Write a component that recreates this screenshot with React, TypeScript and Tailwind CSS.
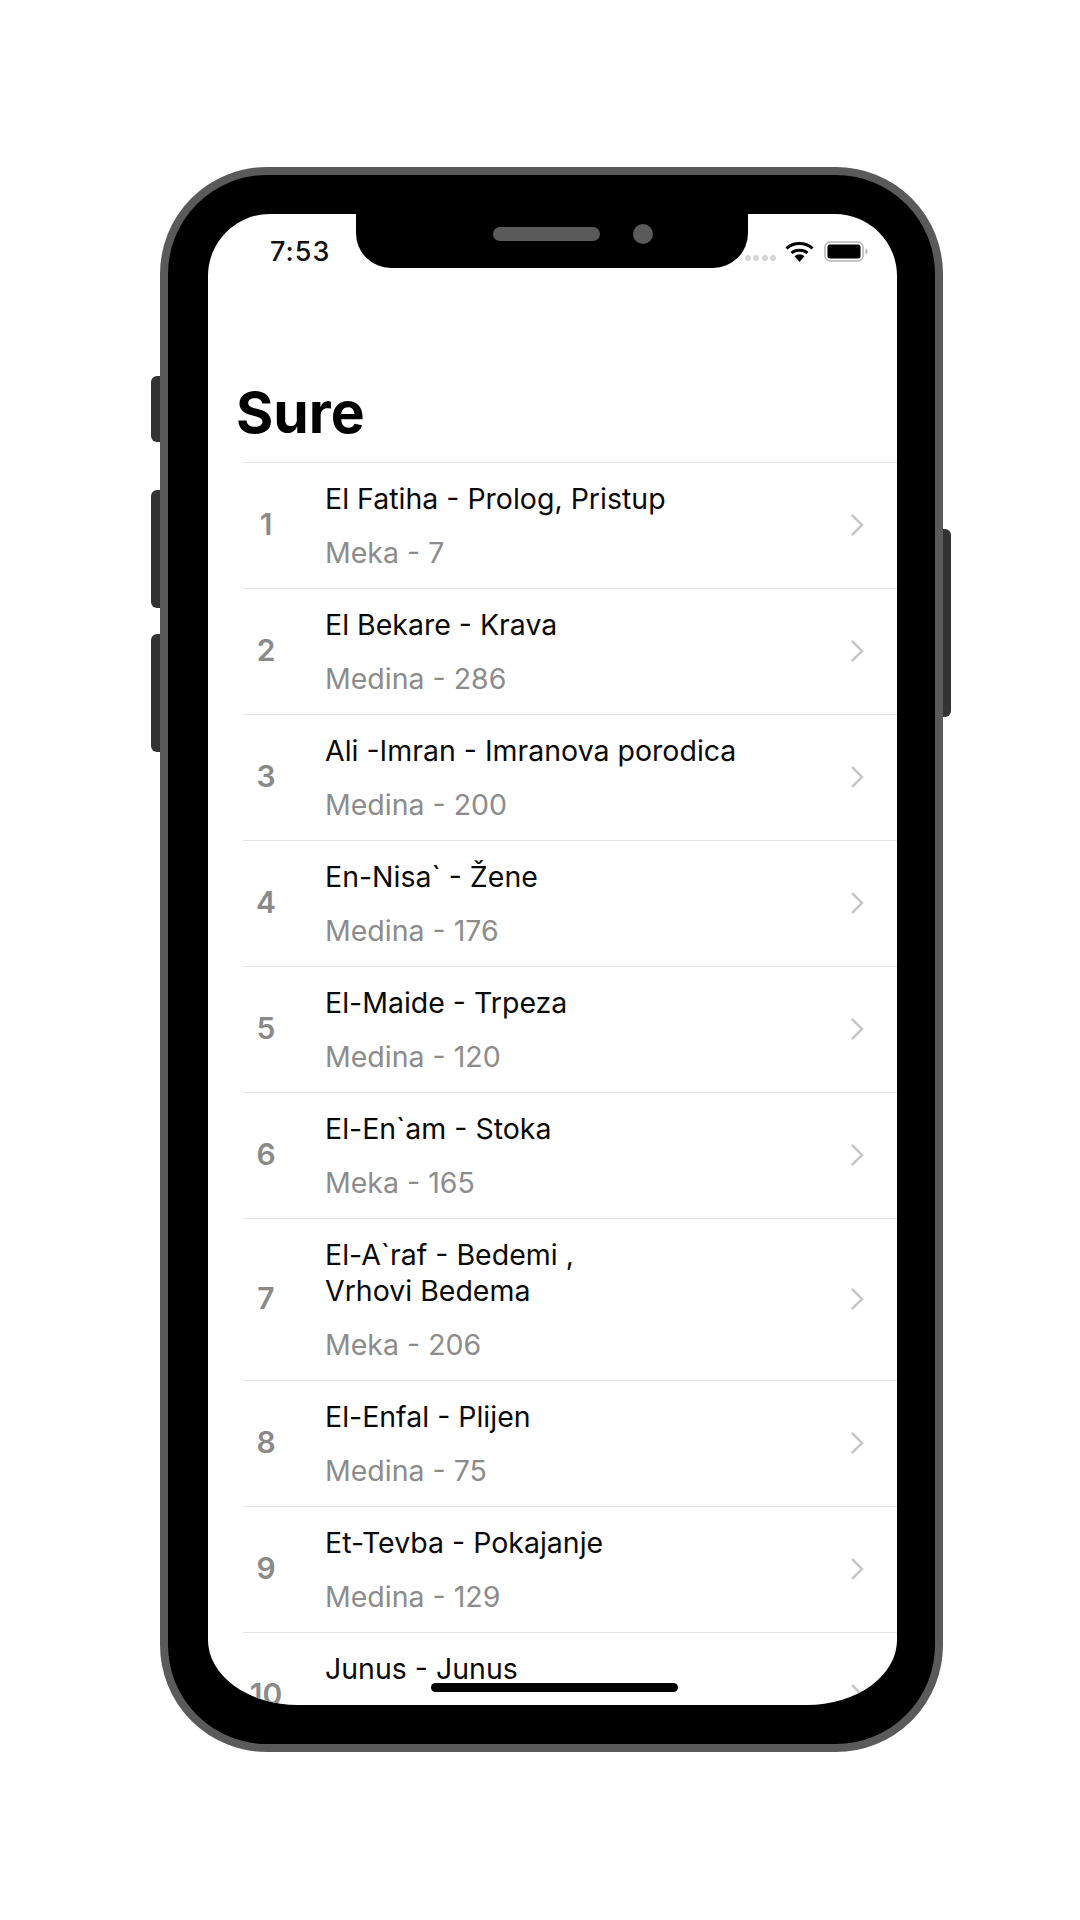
const sure = [
  { n: 1, title: "El Fatiha - Prolog, Pristup", sub: "Meka - 7" },
  { n: 2, title: "El Bekare - Krava", sub: "Medina - 286" },
  { n: 3, title: "Ali -Imran - Imranova porodica", sub: "Medina - 200" },
  { n: 4, title: "En-Nisa` - Žene", sub: "Medina - 176" },
  { n: 5, title: "El-Maide - Trpeza", sub: "Medina - 120" },
  { n: 6, title: "El-En`am - Stoka", sub: "Meka - 165" },
  { n: 7, title: "El-A`raf - Bedemi ,\nVrhovi Bedema", sub: "Meka - 206" },
  { n: 8, title: "El-Enfal - Plijen", sub: "Medina - 75" },
  { n: 9, title: "Et-Tevba - Pokajanje", sub: "Medina - 129" },
  { n: 10, title: "Junus - Junus", sub: "" },
];

function Wifi() {
  return (
    <svg width="29" height="21" viewBox="0 0 29 21" fill="none">
      <path d="M1.5 7.5C8.5 .8 20.5 .8 27.5 7.5" stroke="#000" strokeWidth="3" />
      <path d="M6.5 12C10.5 8.3 18.5 8.3 22.5 12" stroke="#000" strokeWidth="3" />
      <path d="M9.5 15.2C12 13 17 13 19.5 15.2L14.5 21Z" fill="#000" />
    </svg>
  );
}

function Battery() {
  return (
    <svg width="44" height="21" viewBox="0 0 44 21" fill="none">
      <rect x="1" y="1" width="38" height="19" rx="5" stroke="#b5b5b5" strokeWidth="1.5" />
      <rect x="3.5" y="3.5" width="33" height="14" rx="2.5" fill="#000" />
      <path d="M41.5 7.5C43 8 43.5 9 43.5 10.5S43 13 41.5 13.5Z" fill="#b5b5b5" />
    </svg>
  );
}

function Row({ n, title, sub }: { n: number; title: string; sub: string }) {
  return (
    <div className="ml-[35px] flex items-center border-t border-[#e3e3e3]">
      <div className="mt-[-3px] w-[82px] pr-[36px] text-center text-[30px] leading-[36px] font-semibold text-[#8a8a8a]">{n}</div>
      <div className="flex-1 pt-[18px] pb-[17px]">
        <div className="whitespace-pre-line text-[28.5px] leading-[36px] text-[#0a0a0a]">{title}</div>
        <div className="mt-[18px] h-[36px] text-[28.5px] leading-[36px] text-[#8c8c8c]">{sub}</div>
      </div>
      <svg className="mt-[-2px] mr-[33px]" width="14" height="24" viewBox="0 0 14 24" fill="none">
        <path d="M2 2L12 12L2 22" stroke="#c7c7c7" strokeWidth="2.5" />
      </svg>
    </div>
  );
}

export default function App() {
  return (
    <div className="h-[1920px] w-[1080px] bg-white pt-[167px] pl-[160px] font-['Inter',sans-serif]">
      <div className="relative h-[1585px] w-[783px] rounded-[107px] border-[8px] border-[#5a5a5a] bg-black pt-[39px] pr-[38px] pl-[40px]">
        {/* side buttons */}
        <div className="absolute top-[201px] left-[-17px] h-[66px] w-[9px] rounded-l-[6px] bg-[#333333]" />
        <div className="absolute top-[315px] left-[-17px] h-[118px] w-[9px] rounded-l-[6px] bg-[#333333]" />
        <div className="absolute top-[459px] left-[-17px] h-[118px] w-[9px] rounded-l-[6px] bg-[#333333]" />
        <div className="absolute top-[354px] right-[-16px] h-[188px] w-[8px] rounded-r-[6px] bg-[#333333]" />

        <div className="relative h-[1491px] w-[689px] overflow-hidden rounded-t-[62px] rounded-br-[90px_65px] rounded-bl-[90px_65px] bg-white">
          {/* notch */}
          <div className="absolute top-0 left-[148px] flex h-[54px] w-[392px] rounded-b-[35px] bg-black">
            <div className="absolute top-[13px] left-[137px] h-[14px] w-[107px] rounded-full bg-[#5a5a5a]" />
            <div className="absolute top-[10px] left-[277px] h-[20px] w-[20px] rounded-full bg-[#5a5a5a]" />
          </div>

          {/* status bar */}
          <div className="flex h-[60px] items-center justify-between pt-[14px] pr-[29px] pl-[62px]">
            <span className="mt-[2px] text-[27px] leading-[30px] font-medium tracking-[1px] text-[#111111]">7:53</span>
            <div className="flex items-center">
              <div className="mt-[14px] mr-[9px] flex gap-[2.5px]">
                <div className="h-[6px] w-[6px] rounded-full bg-[#d5d5d5]" />
                <div className="h-[6px] w-[6px] rounded-full bg-[#d5d5d5]" />
                <div className="h-[6px] w-[6px] rounded-full bg-[#d5d5d5]" />
                <div className="h-[6px] w-[6px] rounded-full bg-[#d5d5d5]" />
              </div>
              <Wifi />
              <div className="ml-[10px]">
                <Battery />
              </div>
            </div>
          </div>

          <h1 className="mt-[107px] mb-[17px] pl-[28px] text-[57px] leading-[64px] font-bold text-black">Sure</h1>

          {sure.map((s) => (
            <Row key={s.n} n={s.n} title={s.title} sub={s.sub} />
          ))}

          {/* home indicator */}
          <div className="absolute bottom-[13px] left-[223px] h-[9px] w-[247px] rounded-full bg-black" />
        </div>
      </div>
    </div>
  );
}
